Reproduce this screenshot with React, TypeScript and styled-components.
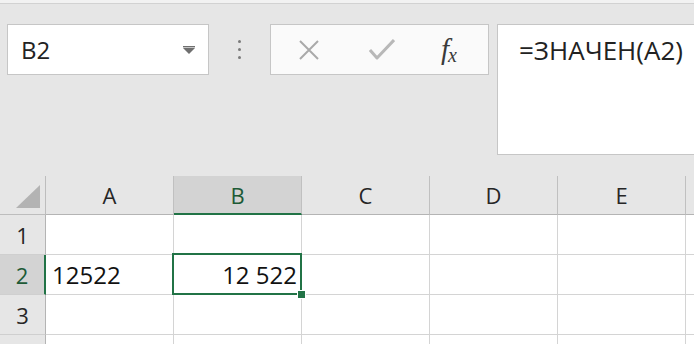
import React from 'react';
import styled, { createGlobalStyle } from 'styled-components';

const GlobalStyle = createGlobalStyle`
  html, body {
    margin: 0;
    padding: 0;
    background: #ffffff;
  }
  body {
    font-family: "Open Sans", "Noto Sans", Arial, sans-serif;
    color: #222;
  }
`;

const Page = styled.div`
  width: 694px;
  height: 344px;
  overflow: hidden;
  display: flex;
  flex-direction: column;
  background: #e6e6e6;
`;

const TopStrip = styled.div`
  flex-shrink: 0;
  height: 3px;
  background: #f2f2f2;
  border-bottom: 1px solid #d2d2d2;
`;

const Toolbar = styled.div`
  flex-shrink: 0;
  height: 172px;
  display: flex;
  align-items: flex-start;
  padding: 20px 0 0 7px;
  box-sizing: border-box;
`;

const NameBox = styled.div`
  flex-shrink: 0;
  width: 202px;
  height: 51px;
  box-sizing: border-box;
  background: #fff;
  border: 1px solid #c6c6c6;
  display: flex;
  align-items: center;
  justify-content: space-between;
  padding: 0 12px 0 13px;
  font-size: 24px;
  color: #222;
`;

const Dots = styled.div`
  flex-shrink: 0;
  width: 61px;
  height: 51px;
  display: flex;
  flex-direction: column;
  align-items: center;
  justify-content: center;
  gap: 5px;
`;

const Dot = styled.span`
  width: 3px;
  height: 3px;
  border-radius: 50%;
  background: #7a7a7a;
`;

const FormulaButtons = styled.div`
  flex-shrink: 0;
  width: 219px;
  height: 51px;
  box-sizing: border-box;
  background: #fafafa;
  border: 1px solid #c6c6c6;
  display: grid;
  grid-template-columns: 75px 72px 1fr;
  align-items: center;
  justify-items: center;
`;

const Fx = styled.span`
  font-family: "Liberation Serif", "DejaVu Serif", serif;
  font-style: italic;
  font-size: 29px;
  line-height: 1;
  color: #3a3a3a;
  padding-right: 8px;
  & > sub {
    font-size: 20px;
    vertical-align: baseline;
    position: relative;
    top: 3px;
    margin-left: -1px;
  }
`;

const FormulaBar = styled.div`
  margin-left: 8px;
  flex: 1;
  height: 131px;
  box-sizing: border-box;
  background: #fff;
  border: 1px solid #c6c6c6;
  border-right: none;
  padding: 7px 0 0 21px;
  font-size: 26px;
  color: #222;
  white-space: nowrap;
`;

const Sheet = styled.div`
  flex: 1;
  min-height: 0;
  overflow: hidden;
  display: grid;
  grid-template-columns: 46px repeat(5, 128px) 1fr;
  grid-template-rows: 39px repeat(4, 40px);
  background: #fff;
`;

const Corner = styled.div`
  background: #e6e6e6;
  border-right: 1px solid #bdbdbd;
  border-bottom: 1px solid #bdbdbd;
  display: flex;
  align-items: flex-end;
  justify-content: flex-end;
  padding: 0 5px 6px 0;
`;

const ColHeader = styled.div<{ $active?: boolean }>`
  background: ${({ $active }) => ($active ? '#d3d3d3' : '#e6e6e6')};
  border-right: 1px solid #c0c0c0;
  border-bottom: ${({ $active }) => ($active ? '2px solid #217346' : '1px solid #b4b4b4')};
  display: flex;
  align-items: center;
  justify-content: center;
  font-size: 22px;
  color: ${({ $active }) => ($active ? '#1d5a36' : '#262626')};
`;

const RowHeader = styled.div<{ $active?: boolean }>`
  background: ${({ $active }) => ($active ? '#d3d3d3' : '#e6e6e6')};
  border-right: ${({ $active }) => ($active ? '2px solid #217346' : '1px solid #b4b4b4')};
  border-bottom: 1px solid #cfcfcf;
  display: flex;
  align-items: center;
  justify-content: center;
  font-size: 22px;
  color: ${({ $active }) => ($active ? '#1d5a36' : '#262626')};
`;

const Cell = styled.div<{ $align?: 'left' | 'right'; $selected?: boolean }>`
  position: relative;
  background: #fff;
  border-right: 1px solid #d4d4d4;
  border-bottom: 1px solid #d4d4d4;
  display: flex;
  align-items: center;
  justify-content: ${({ $align }) => ($align === 'right' ? 'flex-end' : 'flex-start')};
  padding: 0 4px 0 6px;
  font-size: 24px;
  color: #111;
  white-space: nowrap;
  ${({ $selected }) =>
    $selected &&
    `
    &::after {
      content: '';
      position: absolute;
      left: -2px;
      top: -2px;
      right: -1px;
      bottom: -1px;
      border: 2px solid #217346;
      pointer-events: none;
    }
  `}
`;

const FillHandle = styled.span`
  position: absolute;
  right: -5px;
  bottom: -5px;
  width: 7px;
  height: 7px;
  background: #217346;
  border: 1px solid #fff;
  z-index: 2;
`;

const columns = ['A', 'B', 'C', 'D', 'E'];

// row 4 is only a sliver at the bottom edge, its number is not visible
const rows: { n: number; label: string; values: Record<string, string> }[] = [
  { n: 1, label: '1', values: {} },
  { n: 2, label: '2', values: { A: '12522', B: '12 522' } },
  { n: 3, label: '3', values: {} },
  { n: 4, label: '', values: {} },
];

const activeCol = 'B';
const activeRow = 2;

const DropArrow = () => (
  <svg width="14" height="10" viewBox="0 0 14 10">
    <rect x="1" y="1" width="12" height="1.4" fill="#6f6f6f" />
    <path d="M1 3 L13 3 L7 9 Z" fill="#6f6f6f" />
  </svg>
);

const CancelIcon = () => (
  <svg width="22" height="20" viewBox="0 0 22 20">
    <path d="M2 1 L20 19 M20 1 L2 19" stroke="#a9a9a9" strokeWidth="2" fill="none" />
  </svg>
);

const EnterIcon = () => (
  <svg width="26" height="21" viewBox="0 0 26 21">
    <path d="M1 11 L8 19 L25 1" stroke="#b8b8b8" strokeWidth="3" fill="none" strokeLinejoin="round" />
  </svg>
);

const SelectAll = () => (
  <svg width="24" height="23" viewBox="0 0 24 23">
    <path d="M24 0 L24 23 L0 23 Z" fill="#b3b3b3" />
  </svg>
);

const App: React.FC = () => {
  return (
    <Page>
      <GlobalStyle />
      <TopStrip />
      <Toolbar>
        <NameBox>
          <span>B2</span>
          <DropArrow />
        </NameBox>
        <Dots>
          <Dot />
          <Dot />
          <Dot />
        </Dots>
        <FormulaButtons>
          <CancelIcon />
          <EnterIcon />
          <Fx>
            f<sub>x</sub>
          </Fx>
        </FormulaButtons>
        <FormulaBar>=ЗНАЧЕН(A2)</FormulaBar>
      </Toolbar>
      <Sheet>
        <Corner>
          <SelectAll />
        </Corner>
        {columns.map((c) => (
          <ColHeader key={c} $active={c === activeCol}>
            {c}
          </ColHeader>
        ))}
        <ColHeader />
        {rows.map(({ n, label, values }) => (
          <React.Fragment key={n}>
            <RowHeader $active={n === activeRow}>{label}</RowHeader>
            {columns.map((c) => {
              const selected = n === activeRow && c === activeCol;
              return (
                <Cell key={c} $align={c === 'B' ? 'right' : 'left'} $selected={selected}>
                  {values[c] ?? ''}
                  {selected && <FillHandle />}
                </Cell>
              );
            })}
            <Cell />
          </React.Fragment>
        ))}
      </Sheet>
    </Page>
  );
};

export default App;
